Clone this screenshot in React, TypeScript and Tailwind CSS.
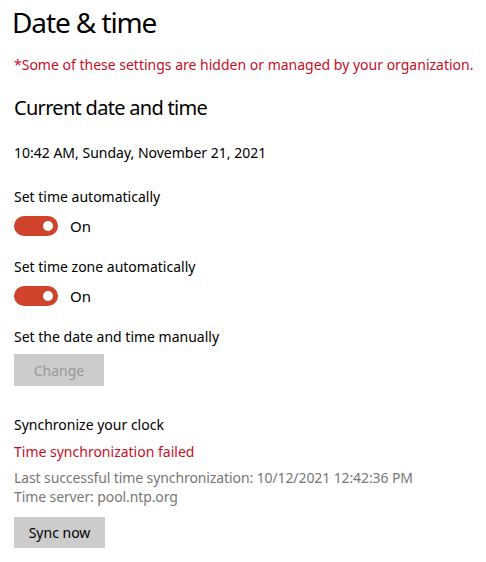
import React from "react";

function Toggle() {
  return (
    <div className="flex items-center mt-[9px] h-[20px]">
      <div className="relative w-[44px] h-[20px] rounded-full bg-[#d0432b]">
        <div className="absolute right-[5px] top-[5px] w-[10px] h-[10px] rounded-full bg-white" />
      </div>
      <span className="ml-[12px] text-[15px] leading-[20px] text-black">On</span>
    </div>
  );
}

export default function App() {
  return (
    <div
      className="w-[486px] h-[562px] bg-white pl-[14px] pt-[4px] text-black"
      style={{ fontFamily: '"Segoe UI", "Noto Sans", "Open Sans", sans-serif' }}
    >
      <h1 className="text-[28px] leading-[36px] font-normal -ml-[2px] tracking-[-1.1px]">Date &amp; time</h1>
      <p className="mt-[15px] text-[14px] leading-[20px] text-[#c50f1f]">
        *Some of these settings are hidden or managed by your organization.
      </p>
      <h2 className="mt-[19px] text-[20px] leading-[28px] font-normal tracking-[-0.7px]">Current date and time</h2>
      <p className="mt-[21px] text-[14px] leading-[20px]">10:42 AM, Sunday, November 21, 2021</p>
      <p className="mt-[24px] text-[14px] leading-[20px]">Set time automatically</p>
      <Toggle />
      <p className="mt-[21px] text-[14px] leading-[20px]">Set time zone automatically</p>
      <Toggle />
      <p className="mt-[21px] text-[14px] leading-[20px]">Set the date and time manually</p>
      <button className="mt-[7px] w-[90px] h-[32px] bg-[#cccccc] text-[#999999] text-[14px] flex items-center justify-center">
        Change
      </button>
      <p className="mt-[29px] text-[14px] leading-[20px]">Synchronize your clock</p>
      <p className="mt-[7px] text-[14px] leading-[20px] text-[#c50f1f]">Time synchronization failed</p>
      <div className="mt-[6px] text-[14px] leading-[19px] text-[#777777] tracking-[-0.1px]">
        <p>Last successful time synchronization: 10/12/2021 12:42:36 PM</p>
        <p>Time server: pool.ntp.org</p>
      </div>
      <button className="mt-[11px] w-[91px] h-[31px] bg-[#cccccc] text-black text-[14px] flex items-center justify-center">
        Sync now
      </button>
    </div>
  );
}
